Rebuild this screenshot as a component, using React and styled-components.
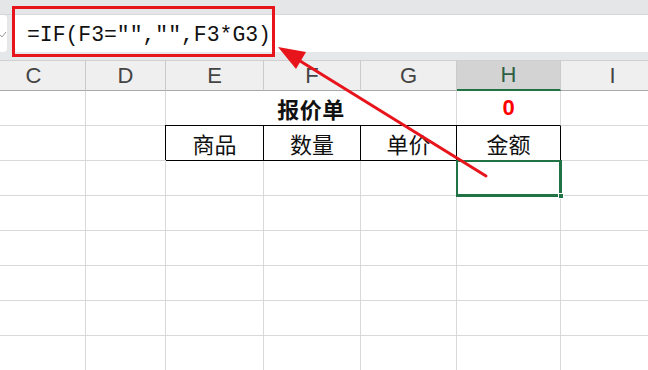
import styled, { createGlobalStyle } from "styled-components";

const GlobalStyle = createGlobalStyle`
  html, body {
    margin: 0;
    padding: 0;
    background: #fff;
    overflow: hidden;
  }
`;

const columns = [
  { key: "C", width: 104 },
  { key: "D", width: 80 },
  { key: "E", width: 98 },
  { key: "F", width: 97 },
  { key: "G", width: 96 },
  { key: "H", width: 104 },
  { key: "I", width: 104 },
];

const gridTemplate = columns.map((c) => `${c.width}px`).join(" ");

const Page = styled.div`
  position: relative;
  width: 648px;
  height: 370px;
  overflow: hidden;
  background: #fff;
  font-family: "Liberation Sans", "Noto Sans CJK SC", sans-serif;
`;

const TopStrip = styled.div`
  height: 14px;
  background: #e5e6e8;
  border-bottom: 1px solid #d6d7d9;
`;

const FormulaRow = styled.div`
  display: flex;
  height: 37px;
  background: #e6e7e9;
`;

const NameBoxStub = styled.div`
  width: 7px;
  background: #fff;
  border-radius: 0 4px 4px 0;
  display: flex;
  align-items: center;
  overflow: hidden;
`;

const FormulaInput = styled.div`
  flex: 1;
  margin-left: 6px;
  background: #fff;
  border-radius: 4px 0 0 4px;
  display: flex;
  align-items: center;
  padding-left: 14px;
  padding-top: 2px;
  font-family: "Liberation Mono", "DejaVu Sans Mono", monospace;
  font-size: 21.4px;
  color: #111;
`;

const Band = styled.div`
  height: 8px;
  background: #e6e7e9;
`;

const Grid = styled.div`
  display: grid;
  grid-template-columns: ${gridTemplate};
  margin-left: -18px;
`;

const HeaderCell = styled.div`
  height: 31px;
  box-sizing: border-box;
  display: flex;
  align-items: center;
  justify-content: center;
  background: ${(p) => (p.$active ? "#d3d3d3" : "#efefef")};
  border-right: 1px solid #cbcbcb;
  border-top: 1px solid #d0d0d0;
  border-bottom: ${(p) => (p.$active ? "2px solid #217346" : "1px solid #a9a9a9")};
  color: ${(p) => (p.$active ? "#2f5f45" : "#444")};
  font-size: 22px;
  font-weight: 300;
`;

const Cell = styled.div`
  height: 35px;
  box-sizing: border-box;
  display: flex;
  align-items: center;
  justify-content: center;
  border-right: 1px solid #d9d9d9;
  border-bottom: 1px solid #d9d9d9;
  grid-column: ${(p) => p.$span || "auto"};
  font-size: 22px;
  color: #111;
  font-family: "Noto Sans CJK SC", "Liberation Sans", sans-serif;
  ${(p) =>
    p.$edgeBottom &&
    `
    border-bottom-color: #000;
  `}
  ${(p) =>
    p.$boxed &&
    `
    border-right-color: #000;
    border-bottom-color: #000;
    box-shadow: -1px -1px 0 0 #000;
  `}
  ${(p) =>
    p.$selected &&
    `
    position: relative;
    box-shadow: 0 0 0 1px #217346, inset 0 0 0 1px #217346;
    border-right-color: #217346;
    border-bottom-color: #217346;
  `}
`;

const Title = styled.span`
  font-weight: 700;
  font-size: 22px;
  letter-spacing: 0.5px;
`;

const Amount = styled.span`
  font-family: "Liberation Sans", sans-serif;
  font-weight: 700;
  font-size: 22px;
  color: #f00;
`;

const FillHandle = styled.span`
  position: absolute;
  right: -4px;
  bottom: -4px;
  width: 6px;
  height: 6px;
  background: #217346;
  border: 1px solid #fff;
  box-sizing: border-box;
`;

const Highlight = styled.div`
  position: absolute;
  left: 12px;
  top: 6px;
  width: 263px;
  height: 51px;
  box-sizing: border-box;
  border: 3px solid #e8141b;
  pointer-events: none;
`;

const Arrow = styled.svg`
  position: absolute;
  left: 0;
  top: 0;
  pointer-events: none;
`;

const headers = ["商品", "数量", "单价", "金额"];

export default function App() {
  const emptyRows = [3, 4, 5, 6, 7, 8];

  return (
    <Page>
      <GlobalStyle />
      <TopStrip />
      <FormulaRow>
        <NameBoxStub>
          <svg width="7" height="10" viewBox="0 0 7 10">
            <path d="M0 6 L2 8 L6 3" fill="none" stroke="#9a9a9a" strokeWidth="1" />
          </svg>
        </NameBoxStub>
        <FormulaInput>=IF(F3="","",F3*G3)</FormulaInput>
      </FormulaRow>
      <Band />
      <Grid>
        {columns.map((c) => (
          <HeaderCell key={c.key} $active={c.key === "H"}>
            {c.key}
          </HeaderCell>
        ))}

        <Cell />
        <Cell />
        <Cell $span="span 3" $edgeBottom>
          <Title>报价单</Title>
        </Cell>
        <Cell $edgeBottom>
          <Amount>0</Amount>
        </Cell>
        <Cell />

        <Cell />
        <Cell />
        {headers.map((h) => (
          <Cell key={h} $boxed>
            {h}
          </Cell>
        ))}
        <Cell />

        {emptyRows.map((r) =>
          columns.map((c) =>
            r === 3 && c.key === "H" ? (
              <Cell key={`${r}${c.key}`} $selected>
                <FillHandle />
              </Cell>
            ) : (
              <Cell key={`${r}${c.key}`} />
            )
          )
        )}
      </Grid>

      <Highlight />
      <Arrow width="648" height="370" viewBox="0 0 648 370">
        <line x1="486" y1="176" x2="292" y2="56" stroke="#e8141b" strokeWidth="3" strokeLinecap="round" />
        <polygon points="278,47 296,69 306,52" fill="#e8141b" />
      </Arrow>
    </Page>
  );
}
